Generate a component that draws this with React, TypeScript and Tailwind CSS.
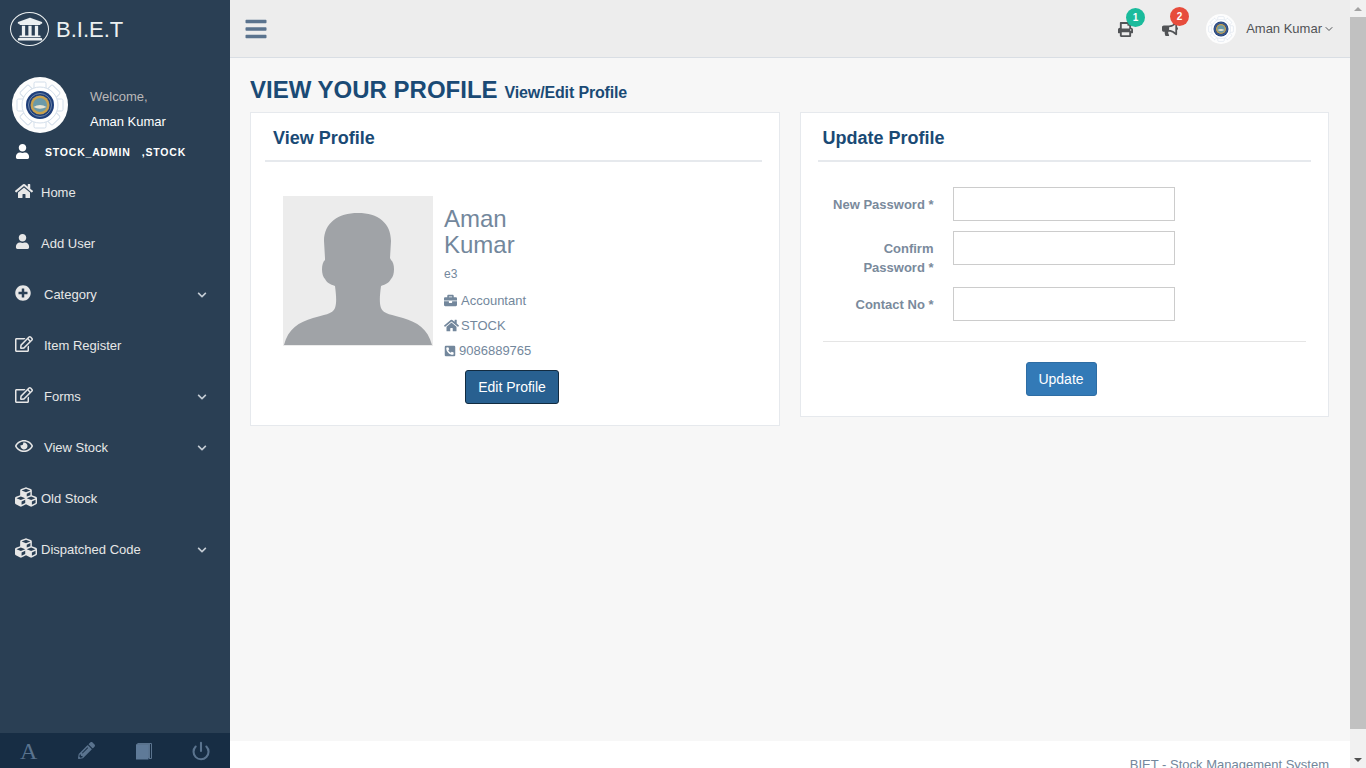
import { ChevronDown, Power } from "lucide-react";
import {
  FaBars,
  FaBriefcase,
  FaBullhorn,
  FaChevronDown,
  FaCubes,
  FaHome,
  FaPencilAlt,
  FaPhoneSquareAlt,
  FaPlusCircle,
  FaPrint,
  FaRegEdit,
  FaRegEye,
  FaUniversity,
  FaUser,
} from "react-icons/fa";

const Emblem = ({ className }: { className?: string }) => {
  const teeth = [0, 45, 90, 135, 180, 225, 270, 315];
  return (
    <svg viewBox="0 0 56 56" className={className}>
      <circle cx="28" cy="28" r="28" fill="#fdfdfd" />
      {teeth.map((a) => (
        <rect
          key={a}
          x="22"
          y="5"
          width="12"
          height="9"
          rx="1.5"
          fill="#fff"
          stroke="#d3deea"
          strokeWidth="1"
          transform={`rotate(${a} 28 28)`}
        />
      ))}
      <circle cx="28" cy="28" r="18" fill="#fff" stroke="#d3deea" strokeWidth="1" />
      <circle cx="28" cy="28" r="14" fill="#1f3f7a" />
      <circle cx="28" cy="28" r="11.5" fill="none" stroke="#6f87a8" strokeWidth="1" />
      <circle cx="28" cy="28" r="9.5" fill="#c9a24f" />
      <circle cx="28" cy="28" r="7" fill="#6b9aa8" />
      <path d="M21.5 30 q6.5 -4 13 0 q-6.5 3.5 -13 0z" fill="#e8e4d2" />
    </svg>
  );
};

const BookIcon = () => (
  <svg viewBox="0 0 16 18" className="w-[16px] h-[18px]">
    <path d="M0 2.5 L2 1 L14 1 L14 16 L2 16 Z" fill="#5a738e" />
    <path d="M0 3 L0 17.5 L12.5 17.5 L12.5 3 Z" fill="#5f7a98" />
    <path d="M14 1.5 H15.5 V16.5 H13" fill="none" stroke="#5a738e" strokeWidth="1" />
  </svg>
);

interface NavItemProps {
  icon: React.ReactNode;
  label: string;
  wide?: boolean;
  caret?: boolean;
}

const NavItem = ({ icon, label, wide, caret }: NavItemProps) => (
  <div className="h-[51px] flex items-center pl-[15px] pr-[23px] text-[13px] text-[#e7e7e7]">
    <span className={`${wide ? "w-[29px]" : "w-[26px]"} flex items-center -mt-[4px] text-[#e7e7e7]`}>{icon}</span>
    <span className="flex-1">{label}</span>
    {caret && <FaChevronDown size={10} className="text-[#c4ccd4]" />}
  </div>
);

const Badge = ({ value, color }: { value: string; color: string }) => (
  <span
    className={`absolute -top-[14px] left-[8px] w-[19px] h-[19px] rounded-full ${color} text-white text-[10px] font-bold flex items-center justify-center`}
  >
    {value}
  </span>
);

const FormRow = ({ label }: { label: string }) => (
  <div className="flex items-start">
    <label className="w-[110px] ml-[6px] pt-[8px] text-right text-[13px] leading-[19px] font-bold text-[#7a8a9c]">
      {label}
    </label>
    <input className="ml-[19px] w-[222px] h-[34px] border border-[#ccc] bg-white" />
  </div>
);

const Silhouette = () => (
  <svg viewBox="0 0 150 150" className="w-[150px] h-[150px] bg-[#ececec] shrink-0">
    <path
      fill="#a0a3a7"
      d="M1 149 C5 133 16 126 30 122 C40 119 50 118 52 112 C54 106 53 98 52 90 C47 88 44 87 42 83 C38 79 38 67 42 64 L42 62 L41 45 C41 27 55 17 75 17 C95 17 108 27 108 45 L107 62 L108 64 C112 67 112 79 108 83 C106 87 103 88 98 90 C97 98 96 106 98 112 C100 118 110 119 120 122 C134 126 145 133 149 149 Z"
    />
  </svg>
);

export default function App() {
  return (
    <div className="h-screen flex overflow-hidden bg-[#f7f7f7] font-['Liberation_Sans',Arial,sans-serif] text-[13px] text-[#73879c]">
      {/* sidebar */}
      <aside className="w-[230px] shrink-0 bg-[#2a3f54] flex flex-col">
        <div className="h-[57px] flex items-center pl-[10px] pt-[1px]">
          <span className="w-[39px] h-[34px] rounded-[50%] border border-[#ecf0f1] flex items-center justify-center text-[#ecf0f1]">
            <FaUniversity size={26} />
          </span>
          <span className="ml-[7px] text-[22px] text-[#ecf0f1]">B.I.E.T</span>
        </div>
        <div className="flex mt-[20px] pl-[12px]">
          <Emblem className="w-[56px] h-[56px]" />
          <div className="ml-[22px] pt-[12px]">
            <div className="text-[13px] leading-[15px] text-[#bab8b8]">Welcome,</div>
            <div className="mt-[10px] text-[13px] leading-[15px] text-white">Aman Kumar</div>
          </div>
        </div>
        <div className="flex items-center pl-[15px] h-[28px] mt-[6px]">
          <FaUser size={15} className="text-white -mt-[4px]" />
          <span className="ml-[15px] text-[10.5px] font-bold tracking-[0.8px] text-white whitespace-pre">STOCK_ADMIN   ,STOCK</span>
        </div>
        <nav className="flex flex-col">
          <NavItem icon={<FaHome size={18} />} label="Home" />
          <NavItem icon={<FaUser size={15} />} label="Add User" />
          <NavItem wide caret icon={<FaPlusCircle size={16} />} label="Category" />
          <NavItem wide icon={<FaRegEdit size={18} />} label="Item Register" />
          <NavItem wide caret icon={<FaRegEdit size={18} />} label="Forms" />
          <NavItem wide caret icon={<FaRegEye size={18} />} label="View Stock" />
          <NavItem icon={<FaCubes size={22} />} label="Old Stock" />
          <NavItem caret icon={<FaCubes size={22} />} label="Dispatched Code" />
        </nav>
        <div className="mt-auto h-[35px] bg-[#172d44] grid grid-cols-4 items-center justify-items-center text-[#5a738e]">
          <span className="font-['Liberation_Serif',serif] text-[24px] leading-none">A</span>
          <FaPencilAlt size={17} />
          <BookIcon />
          <Power size={20} strokeWidth={2.5} />
        </div>
      </aside>

      {/* main column */}
      <div className="flex-1 min-w-0 flex flex-col">
        <header className="h-[58px] shrink-0 bg-[#ededed] border-b border-[#d9dee4] flex items-center pl-[14px] pr-[15px]">
          <FaBars size={24} className="text-[#5a738e]" />
          <div className="ml-auto flex items-center">
            <span className="relative text-[#515356] mr-[29px] mt-[1px]">
              <FaPrint size={15} />
              <Badge value="1" color="bg-[#1abb9c]" />
            </span>
            <span className="relative text-[#515356] mr-[28px] mt-[1px]">
              <FaBullhorn size={16} />
              <Badge value="2" color="bg-[#e74c3c]" />
            </span>
            <Emblem className="w-[30px] h-[30px]" />
            <span className="ml-[10px] text-[13px] text-[#515356]">Aman Kumar</span>
            <ChevronDown size={12} className="ml-[1px] text-[#515356]" />
          </div>
        </header>

        <main className="flex-1 min-h-0 pl-[20px] pr-[21px]">
          <h3 className="mt-[17px] h-[37px] flex items-baseline font-bold text-[#1a4a75]">
            <span className="text-[24px] leading-[30px]">VIEW YOUR PROFILE</span>
            <span className="ml-[7px] text-[16px] -tracking-[0.15px]">View/Edit Profile</span>
          </h3>
          <div className="grid grid-cols-2 gap-[20px] items-start">
            <section className="bg-white border border-[#e6e9ed] h-[314px] px-[14px]">
              <h2 className="h-[49px] pl-[8px] pt-[14px] text-[18px] leading-[22px] font-bold text-[#1a4a75] border-b-2 border-[#e6e9ed] mr-[3px]">
                View Profile
              </h2>
              <div className="flex mt-[34px] ml-[18px]">
                <Silhouette />
                <div className="ml-[11px] pt-[10px]">
                  <div className="w-[90px] text-[24px] leading-[26px]">Aman Kumar</div>
                  <div className="mt-[9px] text-[12px] leading-[15px]">e3</div>
                  <div className="mt-[11px] flex items-center h-[15px]">
                    <FaBriefcase size={13} />
                    <span className="ml-[4px]">Accountant</span>
                  </div>
                  <div className="mt-[10px] flex items-center h-[15px]">
                    <FaHome size={15} />
                    <span className="ml-[2px] text-[13px]">STOCK</span>
                  </div>
                  <div className="mt-[10px] flex items-center h-[15px]">
                    <FaPhoneSquareAlt size={12} />
                    <span className="ml-[3px]">9086889765</span>
                  </div>
                </div>
              </div>
              <button className="block ml-[200px] mt-[12px] w-[94px] h-[34px] rounded-[3px] bg-[#286090] border border-[#122b40] text-white text-[14px]">
                Edit Profile
              </button>
            </section>

            <section className="bg-white border border-[#e6e9ed] h-[305px] px-[17px]">
              <h2 className="h-[49px] pl-[5px] pt-[14px] text-[18px] leading-[22px] font-bold text-[#1a4a75] border-b-2 border-[#e6e9ed]">
                Update Profile
              </h2>
              <div className="mt-[25px] flex flex-col gap-[10px]">
                <FormRow label="New Password *" />
                <FormRow label="Confirm Password *" />
                <FormRow label="Contact No *" />
              </div>
              <div className="mt-[20px] mx-[5px] border-t border-[#e5e5e5]" />
              <button className="block ml-[208px] mt-[20px] w-[71px] h-[34px] rounded-[3px] bg-[#337ab7] border border-[#2e6da4] text-white text-[14px]">
                Update
              </button>
            </section>
          </div>
        </main>

        <footer className="h-[27px] shrink-0 bg-white pt-[16px] pr-[21px] text-right text-[13px] leading-[15px] overflow-hidden">
          BIET - Stock Management System
        </footer>
      </div>

      {/* page scrollbar */}
      <div className="w-[16px] shrink-0 bg-[#f1f1f1] flex flex-col items-center">
        <div className="h-[17px] flex items-center justify-center">
          <div className="w-0 h-0 border-x-[4px] border-x-transparent border-b-[4px] border-b-[#a3a3a3]" />
        </div>
        <div className="w-full flex-1 bg-[#c1c1c1]" />
        <div className="h-[39px] flex items-end pb-[6px] justify-center">
          <div className="w-0 h-0 border-x-[4px] border-x-transparent border-t-[4px] border-t-[#505050]" />
        </div>
      </div>
    </div>
  );
}
